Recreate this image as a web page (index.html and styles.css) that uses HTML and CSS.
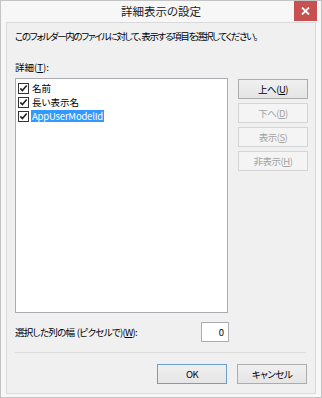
FILE: index.html
```html
<!DOCTYPE html>
<html lang="ja">
<head>
    <meta charset="UTF-8">
    <title>詳細表示の設定</title>
    <link rel="stylesheet" href="styles.css">
</head>
<body>
    <div class="window">
        <div class="titlebar">
            <span></span>
            <div class="title">詳細表示の設定</div>
            <div class="close">
                <svg width="9" height="8" viewBox="0 0 9 8">
                    <path d="M1 0.5 L8 7.5 M8 0.5 L1 7.5" stroke="#fff" stroke-width="1.8"/>
                </svg>
            </div>
        </div>
        <div class="client">
            <p class="desc">このフォルダー内のファイルに対して、表示する項目を選択してください。</p>
            <div class="label">詳細(<u>T</u>):</div>
            <div class="main">
                <div class="listbox">
                    <div class="item">
                        <svg class="check" width="11" height="11" viewBox="0 0 11 11">
                            <rect x="0.5" y="0.5" width="10" height="10" fill="#fff" stroke="#333"/>
                            <path d="M2.3 5.4 L4.4 7.6 L8.7 2.6" fill="none" stroke="#222" stroke-width="1.6"/>
                        </svg>
                        <span class="item-text">名前</span>
                    </div>
                    <div class="item">
                        <svg class="check" width="11" height="11" viewBox="0 0 11 11">
                            <rect x="0.5" y="0.5" width="10" height="10" fill="#fff" stroke="#333"/>
                            <path d="M2.3 5.4 L4.4 7.6 L8.7 2.6" fill="none" stroke="#222" stroke-width="1.6"/>
                        </svg>
                        <span class="item-text">長い表示名</span>
                    </div>
                    <div class="item">
                        <svg class="check" width="11" height="11" viewBox="0 0 11 11">
                            <rect x="0.5" y="0.5" width="10" height="10" fill="#fff" stroke="#333"/>
                            <path d="M2.3 5.4 L4.4 7.6 L8.7 2.6" fill="none" stroke="#222" stroke-width="1.6"/>
                        </svg>
                        <span class="item-text selected">AppUserModelId</span>
                    </div>
                </div>
                <div class="side-buttons">
                    <button class="btn">上へ(<u>U</u>)</button>
                    <button class="btn" disabled>下へ(<u>D</u>)</button>
                    <button class="btn" disabled>表示(<u>S</u>)</button>
                    <button class="btn" disabled>非表示(<u>H</u>)</button>
                </div>
            </div>
            <div class="width-row">
                <span class="width-label">選択した列の幅 (ピクセルで)(<u>W</u>):</span>
                <input class="width-input" type="text" value="0">
            </div>
            <div class="separator"></div>
            <div class="footer-buttons">
                <button class="btn default">OK</button>
                <button class="btn">キャンセル</button>
            </div>
        </div>
    </div>
</body>
</html>
```

FILE: styles.css
```css
body {
    margin: 0;
    padding: 0;
    background-color: #ffffff;
    font-family: "Noto Sans CJK JP", "Noto Sans", sans-serif;
    font-feature-settings: "palt";
    font-size: 9.5px;
    color: #000;
}
.window {
    width: 322px;
    height: 398px;
    box-sizing: border-box;
    border: 1px solid #c4c4c4;
    background-color: #f7f7f7;
    display: flex;
    flex-direction: column;
}
.titlebar {
    height: 21px;
    display: grid;
    grid-template-columns: 1fr auto 1fr;
    align-items: start;
}
.title {
    font-size: 11.5px;
    line-height: 21px;
    color: #222;
}
.close {
    justify-self: end;
    margin-right: 4px;
    width: 23px;
    height: 20px;
    background-color: #c75050;
    display: flex;
    align-items: center;
    justify-content: center;
}
.client {
    flex: 1;
    margin: 0 5px 3px 5px;
    border: 1px solid #dadada;
    background-color: #f0f0f0;
    padding: 6px 7px 0 8px;
    display: flex;
    flex-direction: column;
}
.desc {
    margin: 0;
    line-height: 14px;
    letter-spacing: -1.35px;
}
.label {
    margin-top: 17px;
    line-height: 14px;
}
.main {
    margin-top: 4px;
    display: flex;
    gap: 10px;
}
.listbox {
    width: 213px;
    height: 235px;
    box-sizing: border-box;
    border: 1px solid #abadb3;
    background-color: #fff;
    padding: 2px 0 0 1px;
}
.item {
    height: 14px;
    display: flex;
    align-items: center;
}
.check {
    margin-left: 1px;
    margin-right: 2px;
}
.item-text {
    line-height: 12px;
    padding: 0 1px;
}
.selected {
    background-color: #3399ff;
    color: #fff;
    letter-spacing: -0.2px;
}
.side-buttons {
    margin-top: 1px;
    display: flex;
    flex-direction: column;
    gap: 4px;
}
.btn {
    width: 70px;
    height: 20px;
    box-sizing: border-box;
    padding: 0;
    border: 1px solid #acacac;
    background: linear-gradient(#f0f0f0, #e5e5e5);
    font-family: inherit;
    font-feature-settings: "palt";
    font-size: 9.5px;
    letter-spacing: -0.5px;
    color: #000;
}
.btn:disabled {
    border-color: #d5d5d5;
    background: #f4f4f4;
    color: #a3a3a3;
}
.btn.default {
    border-color: #6a9fd0;
}
.width-row {
    margin-top: 9px;
    width: 214px;
    display: flex;
    justify-content: space-between;
    align-items: center;
}
.width-label {
    letter-spacing: -0.7px;
    word-spacing: 1px;
}
.width-input {
    width: 28px;
    height: 20px;
    box-sizing: border-box;
    border: 1px solid #abadb3;
    padding: 0 4px 0 0;
    text-align: right;
    font-family: inherit;
    font-size: 9.5px;
}
.separator {
    margin-top: 10px;
    margin-right: 2px;
    height: 1px;
    background-color: #dcdcdc;
}
.footer-buttons {
    margin-top: 11px;
    margin-right: 1px;
    display: flex;
    justify-content: flex-end;
    gap: 10px;
}
```
